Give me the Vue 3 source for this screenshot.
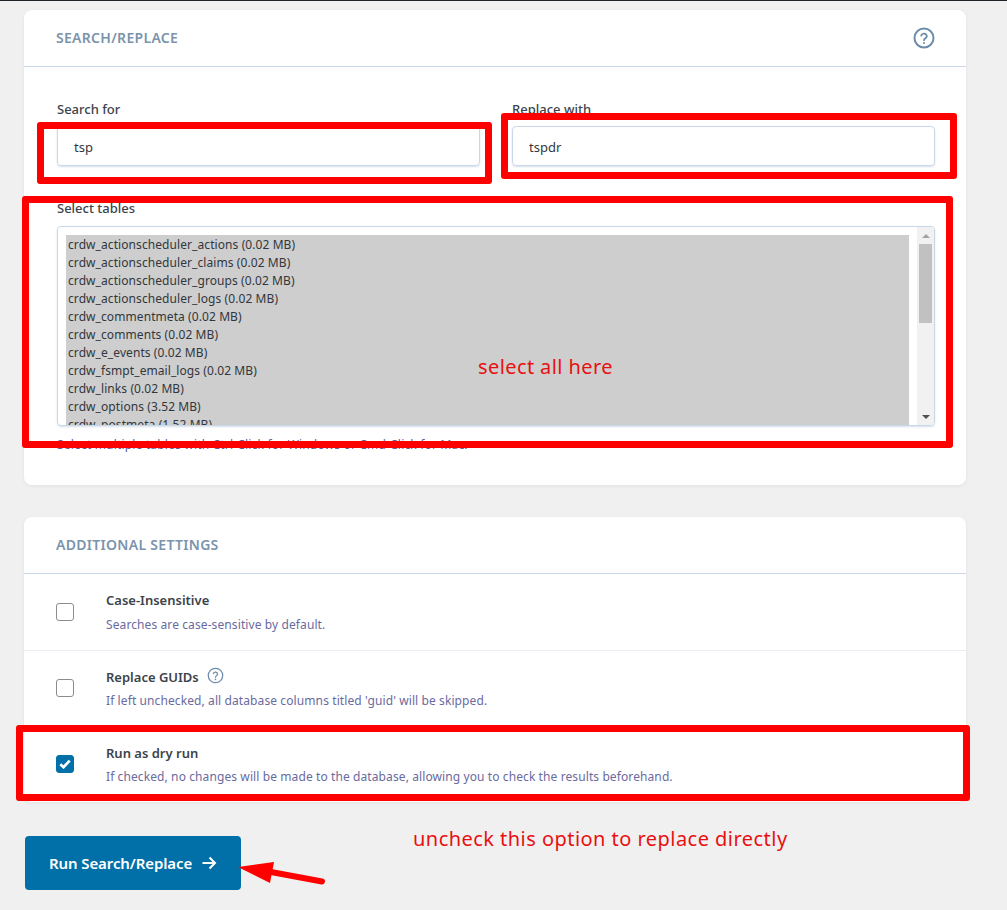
<script setup>
const tables = [
  'crdw_actionscheduler_actions (0.02 MB)',
  'crdw_actionscheduler_claims (0.02 MB)',
  'crdw_actionscheduler_groups (0.02 MB)',
  'crdw_actionscheduler_logs (0.02 MB)',
  'crdw_commentmeta (0.02 MB)',
  'crdw_comments (0.02 MB)',
  'crdw_e_events (0.02 MB)',
  'crdw_fsmpt_email_logs (0.02 MB)',
  'crdw_links (0.02 MB)',
  'crdw_options (3.52 MB)',
  'crdw_postmeta (1.52 MB)'
]
</script>

<template>
  <div class="page">
    <section class="card first">
      <header class="card-head">
        <h2>SEARCH/REPLACE</h2>
        <svg class="help" width="24" height="24" viewBox="0 0 24 24" fill="none">
          <circle cx="12" cy="12" r="9.5" stroke="#6d8dab" stroke-width="2" />
          <path d="M9.2 9.6a2.900 2.900 0 0 1 5.600.6c0 1.900-2.800 2.200-2.800 4" stroke="#6d8dab" stroke-width="1.800" stroke-linecap="round" />
          <circle cx="12" cy="17" r="1.100" fill="#6d8dab" />
        </svg>
      </header>
      <div class="first-body">
        <div class="fields">
          <div class="field">
            <label>Search for</label>
            <div class="input">tsp</div>
          </div>
          <div class="field">
            <label>Replace with</label>
            <div class="input">tspdr</div>
          </div>
        </div>
        <label class="tables-label">Select tables</label>
        <div class="select">
          <div class="list">
            <div v-for="t in tables" :key="t" class="option">{{ t }}</div>
          </div>
          <div class="scrollbar">
            <span class="arrow up"></span>
            <span class="thumb"></span>
            <span class="arrow down"></span>
          </div>
        </div>
        <p class="hint">Select multiple tables with Ctrl-Click for Windows or Cmd-Click for Mac.</p>
      </div>
    </section>

    <section class="card second">
      <header class="card-head">
        <h2>ADDITIONAL SETTINGS</h2>
      </header>
      <div class="row">
        <span class="check"></span>
        <div class="row-text">
          <div class="row-title">Case-Insensitive</div>
          <div class="row-desc">Searches are case-sensitive by default.</div>
        </div>
      </div>
      <div class="row">
        <span class="check"></span>
        <div class="row-text">
          <div class="row-title">
            Replace GUIDs
            <svg class="mini-help" width="17" height="17" viewBox="0 0 24 24" fill="none">
              <circle cx="12" cy="12" r="10.200" stroke="#6d8dab" stroke-width="1.800" />
              <path d="M9 9.400a3 3 0 0 1 5.900.7c0 2-2.900 2.300-2.900 4.200" stroke="#6d8dab" stroke-width="1.800" stroke-linecap="round" />
              <circle cx="12" cy="17.400" r="1.200" fill="#6d8dab" />
            </svg>
          </div>
          <div class="row-desc">If left unchecked, all database columns titled 'guid' will be skipped.</div>
        </div>
      </div>
      <div class="row">
        <span class="check on">
          <svg width="12" height="10" viewBox="0 0 12 10" fill="none">
            <path d="M1.300 5.200 4.500 8.200l6.200-6.600" stroke="#fff" stroke-width="2.700" />
          </svg>
        </span>
        <div class="row-text">
          <div class="row-title">Run as dry run</div>
          <div class="row-desc">If checked, no changes will be made to the database, allowing you to check the results beforehand.</div>
        </div>
      </div>
    </section>

    <button class="run" type="button">
      Run Search/Replace
      <svg width="16" height="14" viewBox="0 0 16 14" fill="none">
        <path d="M1.500 7h12.500M8.500 1.500 14 7l-5.500 5.500" stroke="#fff" stroke-width="2" />
      </svg>
    </button>

    <div class="mark m1"></div>
    <div class="mark m2"></div>
    <div class="mark m3"></div>
    <div class="mark m4"></div>
    <div class="note n1">select all here</div>
    <div class="note n2">uncheck this option to replace directly</div>
    <svg class="pointer" width="100" height="34" viewBox="0 0 100 34">
      <path d="M1 15 37 10 33 31Z" fill="#f00" />
      <path d="M34 20 85 29.500" stroke="#f00" stroke-width="6" stroke-linecap="round" />
    </svg>
  </div>
</template>

<style scoped>
.page {
  position: relative;
  box-sizing: border-box;
  height: 910px;
  overflow: hidden;
  padding: 9px 41px 0 24px;
  border-top: 1px solid #1d2327;
  background: #f0f0f0;
  font-family: "Noto Sans", "Open Sans", sans-serif;
  color: #3c434a;
}
.card {
  background: #fff;
  border-radius: 8px;
  box-shadow: 0 1px 4px rgba(0, 0, 0, 0.06);
}
.first { height: 475px; }
.second { height: 285px; margin-top: 32px; }
.card-head {
  display: flex;
  align-items: center;
  justify-content: space-between;
  box-sizing: border-box;
  height: 57px;
  padding: 0 30px 0 32px;
  border-bottom: 1px solid #c9d8e8;
}
.card-head h2 {
  margin: -2px 0 0;
  font-size: 14px;
  font-weight: 600;
  letter-spacing: 0.3px;
  color: #7b93ab;
}
.first-body { padding: 33px 31px 0 33px; }
.fields { display: flex; gap: 32px; }
.field { flex: 1; }
label {
  display: block;
  font-size: 13px;
  font-weight: 500;
  line-height: 18px;
  color: #3c434a;
}
.input {
  box-sizing: border-box;
  height: 40px;
  margin-top: 8px;
  padding: 0 16px;
  border: 1px solid #c9d8e8;
  border-radius: 4px;
  box-shadow: 0 1px 2px rgba(100, 130, 170, 0.25);
  font-size: 13px;
  line-height: 40px;
  color: #32373c;
}
.tables-label { margin-top: 33px; }
.select {
  display: flex;
  box-sizing: border-box;
  height: 200px;
  margin-top: 9px;
  border: 1px solid #c9d8e8;
  border-radius: 4px;
  box-shadow: 0 1px 2px rgba(100, 130, 170, 0.25);
  overflow: hidden;
}
.list {
  flex: 1;
  margin: 8px 8px 0;
  overflow: hidden;
  background: #cecece;
}
.option {
  height: 18px;
  padding-left: 2px;
  font-size: 12px;
  line-height: 20px;
  letter-spacing: 0.08px;
  white-space: nowrap;
  color: #32373c;
}
.scrollbar {
  display: flex;
  flex-direction: column;
  align-items: center;
  flex: none;
  box-sizing: border-box;
  width: 17px;
  padding: 7px 0 6px;
  background: #f1f1f1;
}
.arrow {
  width: 0;
  height: 0;
  border-left: 4px solid transparent;
  border-right: 4px solid transparent;
}
.arrow.up { border-bottom: 4px solid #a3a3a3; }
.arrow.down { border-top: 4px solid #505050; margin-top: auto; }
.thumb {
  width: 13px;
  height: 79px;
  margin-top: 6px;
  background: #c1c1c1;
}
.hint {
  margin: 10px 0 0;
  font-size: 12px;
  line-height: 18px;
  letter-spacing: 0.18px;
  color: #5e5e9c;
}
.row {
  display: flex;
  box-sizing: border-box;
  height: 76px;
  padding: 17px 32px 0;
}
.row:first-of-type { height: 77px; border-bottom: 1px solid #e8edf3; }
.check {
  display: flex;
  align-items: center;
  justify-content: center;
  flex: none;
  box-sizing: border-box;
  width: 18px;
  height: 18px;
  margin-top: 11px;
  border: 1px solid #8c8c8c;
  border-radius: 3px;
  background: #fff;
}
.row:first-of-type .check { margin-top: 12px; }
.row:first-of-type .row-desc { margin-top: 7px; }
.check.on {
  border-color: #0170a8;
  background: #0170a8;
}
.row-text { margin-left: 32px; }
.row-title {
  display: flex;
  align-items: center;
  gap: 8px;
  height: 18px;
  font-size: 13px;
  font-weight: 600;
  color: #3c434a;
}
.mini-help { margin-top: -3px; }
.row-desc {
  margin-top: 6px;
  font-size: 12px;
  line-height: 18px;
  letter-spacing: 0.1px;
  color: #6a6a9e;
}
.run {
  display: flex;
  align-items: center;
  justify-content: flex-start;
  gap: 9px;
  width: 216px;
  height: 54px;
  margin: 34px 0 0 1px;
  padding: 0 0 0 24px;
  border: 0;
  border-radius: 4px;
  background: #0170a8;
  font-family: inherit;
  font-size: 15px;
  font-weight: 600;
  letter-spacing: -0.1px;
  color: #fff;
}
.mark {
  position: absolute;
  box-sizing: border-box;
  border: 7px solid #f00;
  border-radius: 3px;
  pointer-events: none;
}
.m1 { left: 37px; top: 121px; width: 455px; height: 62px; }
.m2 { left: 501px; top: 112px; width: 456px; height: 66px; }
.m3 { left: 22px; top: 195px; width: 931px; height: 252px; }
.m4 { left: 16px; top: 724px; width: 954px; height: 76px; }
.note {
  position: absolute;
  font-size: 20px;
  line-height: 28px;
  color: #e81010;
  white-space: nowrap;
}
.n1 { left: 478px; top: 352px; letter-spacing: 0.4px; }
.n2 { left: 413px; top: 824px; letter-spacing: 0.46px; }
.pointer { position: absolute; left: 237px; top: 851px; }
</style>

<style>
html, body { margin: 0; background: #f0f0f0; }
</style>
